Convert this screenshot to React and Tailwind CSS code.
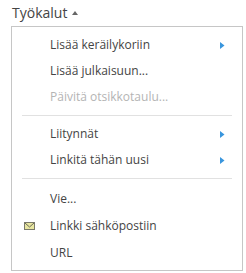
import React from "react";

const Arrow = () => (
  <svg width="5" height="7" viewBox="0 0 5 7" className="block">
    <path d="M0 0 L4.5 3.5 L0 7 Z" fill="#3a96dd" />
  </svg>
);

const Envelope = () => (
  <svg width="11" height="8" viewBox="0 0 11 8" className="block">
    <rect x="0.5" y="0.5" width="10" height="7" fill="#e8e6a0" stroke="#7a7a6a" />
    <path d="M1 1 L5.5 5 L10 1" fill="none" stroke="#6a6a5a" />
  </svg>
);

const Row = ({ label, disabled, arrow, icon, tall }) => (
  <div className={"flex items-center pr-[17px] " + (tall ? "h-[27px]" : "h-[26px]")}>
    <div className="flex w-[38px] items-center pl-[12px]">{icon}</div>
    <span className={"flex-1 " + (disabled ? "text-[#b4b4b4]" : "text-[#444444]")}>{label}</span>
    {arrow && <Arrow />}
  </div>
);

const Sep = ({ extra }) => (
  <div className={"pt-[5px] px-[10px] " + (extra ? "pb-[6px]" : "pb-[5px]")}>
    <div className="h-px bg-[#e1e1e1]" />
  </div>
);

export default function App() {
  return (
    <div className="h-[273px] w-[246px] bg-white" style={{ fontFamily: '"Open Sans", "Noto Sans", sans-serif' }}>
      <div className="flex h-[26px] items-center pl-[12px] pb-[1px] text-[14px] text-[#444444]">
        <span>Työkalut</span>
        <svg width="6" height="4" viewBox="0 0 6 4" className="ml-[5px] block">
          <path d="M0 4 L3 0 L6 4 Z" fill="#666666" />
        </svg>
      </div>
      <div className="ml-[11px] h-[245px] w-[232px] border border-[#c6c6c6] pt-[5px] text-[12px]">
        <Row label="Lisää keräilykoriin" arrow />
        <Row label="Lisää julkaisuun..." />
        <Row label="Päivitä otsikkotaulu..." disabled />
        <Sep />
        <Row label="Liitynnät" arrow />
        <Row label="Linkitä tähän uusi" arrow />
        <Sep extra />
        <Row label="Vie..." tall />
        <Row label="Linkki sähköpostiin" icon={<Envelope />} tall />
        <Row label="URL" tall />
      </div>
    </div>
  );
}
